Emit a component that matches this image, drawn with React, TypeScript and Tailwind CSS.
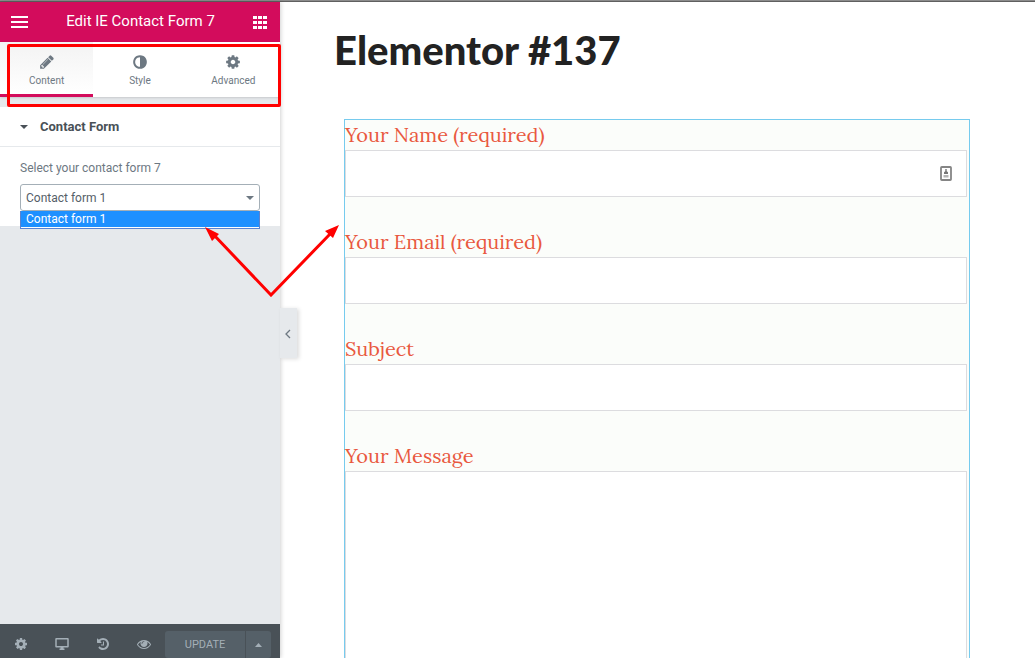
import React from 'react';

const ICONS = {
  pencil:
    'M491 1536l91-91-235-235-91 91v107h128v128h107zm523-928q0-22-22-22-10 0-17 7l-542 542q-7 7-7 17 0 22 22 22 10 0 17-7l542-542q7-7 7-17zm-54-192l416 416-832 832h-416v-416zm683 96q0 53-37 90l-166 166-416-416 166-165q36-38 90-38 53 0 91 38l235 234q37 39 37 91z',
  adjust:
    'M896 1440v-1088q-148 0-273 73t-198 198-73 273 73 273 198 198 273 73zm768-544q0 209-103 385.5t-279.5 279.5-385.5 103-385.5-103-279.5-279.5-103-385.5 103-385.5 279.5-279.5 385.5-103 385.5 103 279.5 279.5 103 385.5z',
  cog: 'M1152 896q0-106-75-181t-181-75-181 75-75 181 75 181 181 75 181-75 75-181zm512-109v222q0 12-8 23t-20 13l-185 28q-19 54-39 91 35 50 107 138 10 12 10 25t-9 23q-27 37-99 108t-94 71q-12 0-26-9l-138-108q-44 23-91 38-16 136-29 186-7 28-36 28h-222q-14 0-24.5-8.5t-11.5-21.5l-28-184q-49-16-90-37l-141 107q-10 9-25 9-14 0-25-11-126-114-165-168-7-10-7-23 0-12 8-23 15-21 51-66.5t54-70.5q-27-50-41-99l-183-27q-13-2-21-12.5t-8-23.5v-222q0-12 8-23t19-13l186-28q14-46 39-92-40-57-107-138-10-12-10-24 0-10 9-23 26-36 98.5-107.5t94.5-71.5q13 0 26 10l138 107q44-23 91-38 16-136 29-186 7-28 36-28h222q14 0 24.5 8.5t11.5 21.5l28 184q49 16 90 37l142-107q9-9 24-9 13 0 25 10 129 119 165 170 7 8 7 22 0 12-8 23-15 21-51 66.5t-54 70.5q26 50 41 98l183 28q13 2 21 12.5t8 23.5z',
  desktop:
    'M160 128h1472a128 128 0 0 1 128 128v960a128 128 0 0 1-128 128h-544v128h128v192h-640v-192h128v-128h-544a128 128 0 0 1-128-128v-960a128 128 0 0 1 128-128zM224 320v832h1344v-832z',
  history:
    'M1664 896q0 156-61 298t-164 245-245 164-298 61q-172 0-327-72.5t-264-204.5q-7-10-6.5-22.5t8.5-20.5l137-138q10-9 25-9 16 2 23 12 73 95 179 147t225 52q104 0 198.5-40.5t163.5-109.5 109.5-163.5 40.5-198.5-40.5-198.5-109.5-163.5-163.5-109.5-198.5-40.5q-98 0-188 35.5t-160 101.5l137 138q31 30 14 69-17 40-59 40h-448q-26 0-45-19t-19-45v-448q0-42 40-59 39-17 69 14l130 129q107-101 244.5-156.5t284.5-55.5q156 0 298 61t245 164 164 245 61 298zm-640-288v448q0 14-9 23t-23 9h-320q-14 0-23-9t-9-23v-64q0-14 9-23t23-9h224v-352q0-14 9-23t23-9h64q14 0 23 9t9 23z',
  eye: 'M1664 960q-152-236-381-353 61 104 61 225 0 185-131.5 316.500t-316.500 131.500-316.500-131.500-131.500-316.500q0-121 61-225-229 117-381 353 133 205 333.500 326.500t434.500 121.500 434.500-121.500 333.500-326.500zm-720-384q0-20-14-34t-34-14q-125 0-214.500 89.500t-89.500 214.500q0 20 14 34t34 14 34-14 14-34q0-86 61-147t147-61q20 0 34-14t14-34zm848 384q0 34-20 69-140 230-376.500 368.500t-499.500 138.500-499.500-139-376.500-368q-20-35-20-69t20-69q140-229 376.500-368t499.500-139 499.500 139 376.500 368q20 35 20 69z',
};

type IconName = keyof typeof ICONS;

function Icon({ name, className = 'size-3.5' }: { name: IconName; className?: string }) {
  return (
    <svg
      viewBox="0 0 1792 1792"
      fill="currentColor"
      fillRule={name === 'desktop' ? 'evenodd' : 'nonzero'}
      className={className}
      aria-hidden="true"
    >
      <path d={ICONS[name]} />
    </svg>
  );
}

const tabs: { label: string; icon: IconName }[] = [
  { label: 'Content', icon: 'pencil' },
  { label: 'Style', icon: 'adjust' },
  { label: 'Advanced', icon: 'cog' },
];

const tools: { label: string; icon: IconName }[] = [
  { label: 'Settings', icon: 'cog' },
  { label: 'Responsive Mode', icon: 'desktop' },
  { label: 'History', icon: 'history' },
  { label: 'Preview Changes', icon: 'eye' },
];

function PanelHeader() {
  return (
    <header className="flex h-10 shrink-0 items-center justify-between bg-[#d30c5c] pr-3 pl-[11px] text-white">
      <button type="button" aria-label="Menu">
        <svg viewBox="0 0 17 12" className="h-3 w-[17px]" fill="currentColor">
          <path d="M0 0h17v2H0zM0 5h17v2H0zM0 10h17v2H0z" />
        </svg>
      </button>
      <h2 className="pb-0.5 text-[15px] leading-5">Edit IE Contact Form 7</h2>
      <button type="button" aria-label="Widgets" className="pr-px">
        <svg viewBox="0 0 14 13" className="h-[13px] w-3.5" fill="currentColor">
          <path d="M0 0h4v3H0zM5 0h4v3H5zM10 0h4v3h-4zM0 5h4v3H0zM5 5h4v3H5zM10 5h4v3h-4zM0 10h4v3H0zM5 10h4v3H5zM10 10h4v3h-4z" />
        </svg>
      </button>
    </header>
  );
}

function PanelTabs() {
  return (
    <div className="relative shrink-0">
      <nav className="grid h-[55px] grid-cols-3 bg-white text-[#6d7882] shadow-sm">
        {tabs.map((tab, i) => (
          <button
            key={tab.label}
            type="button"
            className={
              i === 0
                ? 'flex flex-col items-center gap-[5px] border-b-3 border-[#d30c5c] bg-linear-to-b from-[#f3f3f3] to-white pt-3'
                : 'flex flex-col items-center gap-[5px] pt-3'
            }
          >
            <Icon name={tab.icon} className="size-4" />
            <span className="text-[10px] leading-3">{tab.label}</span>
          </button>
        ))}
      </nav>
      <div className="pointer-events-none absolute top-0.5 -right-px -bottom-2.5 left-[7px] z-10 rounded-xs border-3 border-[#ff0000]" />
    </div>
  );
}

function ContactFormSection() {
  return (
    <section className="mt-2.5 h-[119px] bg-white">
      <button
        type="button"
        className="flex h-10 w-full items-center gap-3 border-b border-[#e6e9ec] px-5 text-[13px] font-bold text-[#495157]"
      >
        <svg viewBox="0 0 8 4" className="h-1 w-2" fill="currentColor">
          <path d="M0 0h8L4 4z" />
        </svg>
        Contact Form
      </button>
      <div className="px-5 pt-3">
        <label htmlFor="form-select" className="block text-xs leading-[18px] text-[#6d7882]">
          Select your contact form 7
        </label>
        <div className="relative mt-[7px]">
          <select
            id="form-select"
            className="block h-[27px] w-full appearance-none rounded-[3px] border border-[#a4afb7] bg-white px-[5px] text-xs text-[#556068]"
          >
            <option>Contact form 1</option>
          </select>
          <svg
            viewBox="0 0 8 4"
            className="pointer-events-none absolute top-3 right-1.5 h-1 w-2 text-[#6d7882]"
            fill="currentColor"
          >
            <path d="M0 0h8L4 4z" />
          </svg>
          <ul
            role="listbox"
            aria-label="Contact forms"
            className="absolute inset-x-0 top-full border border-t-0 border-[#5b83d0] bg-white pb-px"
          >
            <li
              role="option"
              aria-selected="true"
              className="bg-[#1e90ff] px-[5px] text-xs leading-4 text-white"
            >
              Contact form 1
            </li>
          </ul>
        </div>
      </div>
    </section>
  );
}

function PanelFooter() {
  return (
    <footer className="mt-auto flex h-[34px] shrink-0 items-end bg-[#495157] text-[#a4afb7]">
      <div className="grid h-8 flex-1 grid-cols-4">
        {tools.map((tool) => (
          <button
            key={tool.label}
            type="button"
            aria-label={tool.label}
            className="flex items-center justify-center pt-1"
          >
            <Icon name={tool.icon} />
          </button>
        ))}
      </div>
      <div className="mr-[9px] flex h-[27px] gap-px text-[11px]">
        <button type="button" className="w-20 rounded-l-[3px] bg-[#556068] pt-px">
          UPDATE
        </button>
        <button
          type="button"
          aria-label="Save options"
          className="flex w-[25px] items-center justify-center rounded-r-[3px] bg-[#556068]"
        >
          <svg viewBox="0 0 7 4" className="h-1 w-[7px]" fill="currentColor">
            <path d="M0 4h7L3.500 0z" />
          </svg>
        </button>
      </div>
    </footer>
  );
}

function CollapseHandle() {
  return (
    <button
      type="button"
      aria-label="Hide panel"
      className="absolute top-[306px] left-full flex h-[50px] w-[17px] items-center justify-center bg-[#e6e9ec] pt-0.5 pr-0.5 text-[#6d7882] shadow-[2px_1px_4px_rgba(0,0,0,0.14)]"
    >
      <svg viewBox="0 0 6 10" className="h-2.5 w-1.5" fill="none" stroke="currentColor" strokeWidth="1.3">
        <path d="M5 1L1 5l4 4" />
      </svg>
    </button>
  );
}

const controlClass = 'block w-full border border-[#dcdcdf] bg-white px-3 font-sans text-base';

function Field({ id, label, children }: { id: string; label: string; children: React.ReactNode }) {
  return (
    <div className="mb-[30px]">
      <label htmlFor={id} className="block text-xl leading-[30px] text-[#e9593f]">
        {label}
      </label>
      {children}
    </div>
  );
}

function AutofillIcon() {
  return (
    <svg
      viewBox="0 0 12 15"
      className="pointer-events-none absolute top-4 right-[15px] h-[15px] w-3"
      aria-hidden="true"
    >
      <rect x="1" y="1" width="10" height="13" rx="0.8" fill="#fff" stroke="#858585" strokeWidth="1.8" />
      <path d="M5.300 3h1.400v2.200l1.300 1v1.800H4V6.200l1.300-1z" fill="#777" />
      <path d="M3.500 9h5v2.500h-5z" fill="#b5b5b5" />
    </svg>
  );
}

function Preview() {
  return (
    <main className="h-full min-w-0 flex-1 overflow-hidden bg-white pr-[65px] pl-[54px]">
      <h1 className="pt-[23px] font-['Lato',sans-serif] text-[40px] leading-[50px] font-black text-[#222]">
        Elementor #137
      </h1>
      <form className="mt-11 ml-2.5 border border-[#76cbee] bg-[#fbfdfa] pr-0.5 font-['Lora',serif]">
        <Field id="name" label="Your Name (required)">
          <div className="relative">
            <input id="name" type="text" className={`${controlClass} h-[47px]`} />
            <AutofillIcon />
          </div>
        </Field>
        <Field id="email" label="Your Email (required)">
          <input id="email" type="email" className={`${controlClass} h-[47px]`} />
        </Field>
        <Field id="subject" label="Subject">
          <input id="subject" type="text" className={`${controlClass} h-[47px]`} />
        </Field>
        <Field id="message" label="Your Message">
          <textarea id="message" className={`${controlClass} h-64 resize-none`} />
        </Field>
      </form>
    </main>
  );
}

function Arrows() {
  return (
    <svg
      viewBox="0 0 136 72"
      className="pointer-events-none absolute top-[225px] left-[204px] z-20 h-[72px] w-[136px]"
      aria-hidden="true"
    >
      <path d="M9 9L67 70L127 8" fill="none" stroke="#ff0000" strokeWidth="3" />
      <path d="M1 2L15 9L8 16ZM135 0L129 13L121 6Z" fill="#ff0000" />
    </svg>
  );
}

export default function App() {
  return (
    <div className="relative flex h-screen flex-col overflow-hidden font-['Roboto',sans-serif]">
      <div className="h-0.5 shrink-0 border-b border-[#606060] bg-[#8c8c8c]" />
      <div className="flex min-h-0 flex-1">
        <aside className="relative z-10 flex w-[280px] shrink-0 flex-col bg-[#e6e9ec] shadow-[1px_0_4px_rgba(0,0,0,0.18)]">
          <PanelHeader />
          <PanelTabs />
          <ContactFormSection />
          <PanelFooter />
          <CollapseHandle />
        </aside>
        <Preview />
      </div>
      <Arrows />
    </div>
  );
}
